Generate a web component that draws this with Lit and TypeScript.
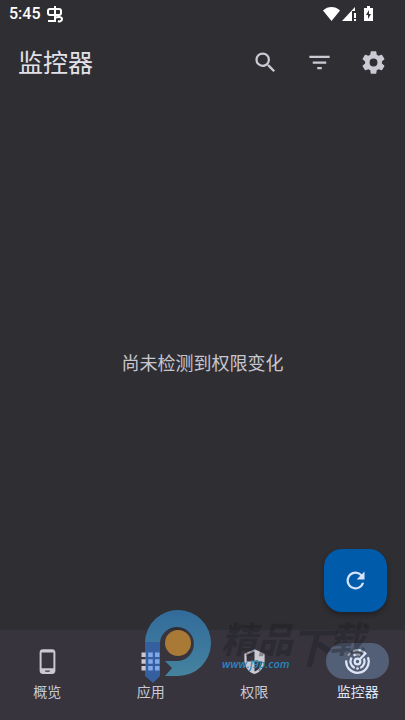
import { LitElement, html, css, svg } from "lit";
import { customElement, state } from "lit/decorators.js";
import { classMap } from "lit/directives/class-map.js";

const icons = {
  search: svg`<path d="M15.5 14h-.79l-.28-.27A6.47 6.47 0 0 0 16 9.5 6.5 6.5 0 1 0 9.5 16c1.61 0 3.09-.59 4.23-1.57l.27.28v.79l5 4.99L20.49 19l-4.99-5zm-6 0a4.5 4.5 0 1 1 0-9 4.5 4.5 0 0 1 0 9z"/>`,
  filter: svg`<path d="M10 18h4v-2h-4v2zM3 6v2h18V6H3zm3 7h12v-2H6v2z"/>`,
  settings: svg`<path d="M19.43 12.98c.04-.32.07-.64.07-.98s-.03-.66-.07-.98l2.11-1.65c.19-.15.24-.42.12-.64l-2-3.46c-.12-.22-.39-.3-.61-.22l-2.49 1c-.52-.4-1.08-.73-1.69-.98l-.38-2.65A.488.488 0 0 0 14 2h-4c-.25 0-.46.18-.49.42l-.38 2.65c-.61.25-1.17.59-1.69.98l-2.49-1c-.23-.09-.49 0-.61.22l-2 3.46c-.13.22-.07.49.12.64l2.11 1.65c-.04.32-.07.65-.07.98s.03.66.07.98l-2.11 1.65c-.19.15-.24.42-.12.64l2 3.46c.12.22.39.3.61.22l2.49-1c.52.4 1.08.73 1.69.98l.38 2.65c.03.24.24.42.49.42h4c.25 0 .46-.18.49-.42l.38-2.65c.61-.25 1.17-.59 1.69-.98l2.49 1c.23.09.49 0 .61-.22l2-3.46c.12-.22.07-.49-.12-.64l-2.11-1.65zM12 15.5a3.5 3.5 0 1 1 0-7 3.5 3.5 0 0 1 0 7z"/>`,
  refresh: svg`<path d="M17.65 6.35A7.96 7.96 0 0 0 12 4a8 8 0 1 0 7.73 10h-2.08A6 6 0 1 1 12 6c1.66 0 3.14.69 4.22 1.78L13 11h7V4l-2.35 2.35z"/>`,
  phone: svg`<path d="M16 1H8a3 3 0 0 0-3 3v16a3 3 0 0 0 3 3h8a3 3 0 0 0 3-3V4a3 3 0 0 0-3-3zm-2 20h-4v-1h4v1zm3.25-3H6.75V4h10.5v14z"/>`,
  apps: svg`<path d="M4 8h4V4H4v4zm6 12h4v-4h-4v4zm-6 0h4v-4H4v4zm0-6h4v-4H4v4zm6 0h4v-4h-4v4zm6-10v4h4V4h-4zm-6 4h4V4h-4v4zm6 6h4v-4h-4v4zm0 6h4v-4h-4v4z"/>`,
  shield: svg`<path d="M12 1 3 5v6c0 5.55 3.84 10.74 9 12 5.16-1.26 9-6.45 9-12V5l-9-4zm0 10.99h7c-.53 4.12-3.28 7.79-7 8.94V12H5V6.3l7-3.11v8.8z"/>`,
  radar: svg`<g fill="none" stroke="currentColor" stroke-width="2"><path d="M2 11A10 10 0 1 0 21.2 8.200M3.700 6.700 5.500 4.500M8 2.900A10 10 0 0 1 19 4.900L13.800 10.200M6.800 8.600A6.200 6.200 0 0 0 9.500 17.700M14.500 17.700A6.200 6.200 0 0 0 17.600 9.400M8.500 6.800A6.200 6.200 0 0 1 14.500 6.300"/><circle cx="12" cy="12" r="2.500"/></g><circle cx="12" cy="18.200" r="1.200"/>`,
};

type IconName = keyof typeof icons;

const icon = (name: IconName) =>
  html`<svg class="icon" viewBox="0 0 24 24" aria-hidden="true">${icons[name]}</svg>`;

const tabs: { label: string; icon: IconName }[] = [
  { label: "概览", icon: "phone" },
  { label: "应用", icon: "apps" },
  { label: "权限", icon: "shield" },
  { label: "监控器", icon: "radar" },
];

@customElement("app-root")
export class AppRoot extends LitElement {
  @state() private current = 3;

  static styles = css`
    :host {
      display: flex;
      flex-direction: column;
      position: relative;
      min-height: 100vh;
      background: #2f2e33;
      color: #e4e2e9;
      font-family: Roboto, "Noto Sans CJK SC", sans-serif;
      overflow: hidden;
    }
    * { box-sizing: border-box; }
    svg { display: block; }
    button {
      border: 0;
      padding: 0;
      margin: 0;
      background: none;
      color: inherit;
      font: inherit;
      cursor: pointer;
    }
    .icon { width: 27px; height: 27px; fill: currentColor; }
    .status {
      display: flex;
      align-items: center;
      height: 28px;
      padding: 0 30px 0 9px;
      color: #fff;
    }
    .time { font-size: 16px; line-height: 20px; font-weight: 500; }
    .note { width: 18px; height: 18px; margin-left: 6px; }
    .signals { width: 52px; height: 16px; margin-left: auto; }
    .bar {
      display: flex;
      align-items: center;
      height: 69px;
      padding: 0 5px 0 18px;
    }
    h1 {
      flex: 1;
      margin: 0;
      padding-top: 2px;
      font-size: 25px;
      line-height: 32px;
      font-weight: 400;
    }
    .action {
      display: grid;
      place-items: center;
      width: 54px;
      height: 54px;
      color: #cbcad3;
    }
    main {
      flex: 1;
      display: grid;
      place-items: center;
    }
    .empty {
      margin: 0;
      font-size: 18px;
      line-height: 28px;
      color: #c7c6ce;
    }
    .fab {
      position: absolute;
      right: 18px;
      bottom: 108px;
      display: grid;
      place-items: center;
      width: 63px;
      height: 63px;
      border-radius: 18px;
      background: #005cab;
      color: #d7e3fb;
      box-shadow: 0 3px 5px rgba(0, 0, 0, 0.3);
    }
    nav {
      display: flex;
      gap: 9px;
      height: 90px;
      background: #37343e;
    }
    .tab {
      flex: 1;
      display: flex;
      flex-direction: column;
      align-items: center;
      padding-top: 13px;
      gap: 3px;
      font-size: 14px;
      line-height: 20px;
      color: #cac9d2;
    }
    .pill {
      display: grid;
      place-items: center;
      width: 63px;
      height: 36px;
      border-radius: 18px;
    }
    .active { color: #dde4f5; }
    .active .pill { background: #535f76; }
    .mark {
      position: absolute;
      right: 32px;
      bottom: 30px;
      width: 230px;
      height: 80px;
      pointer-events: none;
    }
    .brand {
      font: italic 700 36px "Noto Sans CJK SC", sans-serif;
      fill: #1b1a1e;
      fill-opacity: 0.4;
    }
    .tall { font-size: 42px; }
    .site {
      font: italic 600 11px "Open Sans", sans-serif;
      fill: #2b86bb;
    }
  `;

  render() {
    return html`
      <div class="status">
        <span class="time">5:45</span>
        <svg class="note" viewBox="0 0 18 18" fill="none" stroke="currentColor" stroke-width="2" aria-hidden="true">
          <rect x="1" y="4" width="13" height="6" rx="2"/>
          <path d="M8 1v15H1M8 13c3-2 7-1 7 1s-2 3-4 2"/>
        </svg>
        <svg class="signals" viewBox="0 0 52 16" fill="currentColor" aria-hidden="true">
          <path d="M0 4.500C5-.1 12-.1 17 4.500L8.500 15z"/>
          <path d="M19 15 32 1v4h-3v10zM31 7h2v5h-2zM31 13h2v2h-2z"/>
          <path fill-rule="evenodd" d="M41 2h3V0h3v2h3v13h-9zM46 4l-3 5h2v4l3-5h-2z"/>
        </svg>
      </div>
      <header class="bar">
        <h1>监控器</h1>
        <button class="action" aria-label="搜索">${icon("search")}</button>
        <button class="action" aria-label="筛选">${icon("filter")}</button>
        <button class="action" aria-label="设置">${icon("settings")}</button>
      </header>
      <main><p class="empty">尚未检测到权限变化</p></main>
      <nav>
        ${tabs.map(
          (tab, i) => html`<button
            class=${classMap({ tab: true, active: i === this.current })}
            aria-current=${i === this.current ? "page" : "false"}
            @click=${() => (this.current = i)}
          >
            <span class="pill">${icon(tab.icon)}</span>
            <span>${tab.label}</span>
          </button>`
        )}
      </nav>
      <svg class="mark" viewBox="0 0 230 80" aria-hidden="true">
        <defs>
          <linearGradient id="ring" x1="0" y1="0" x2="0" y2="1">
            <stop offset="0" stop-color="#326b9b"/>
            <stop offset="1" stop-color="#45839f"/>
          </linearGradient>
        </defs>
        <path fill="url(#ring)" d="M2 32a33 33 0 1 1 33 34H22l7-8-7-7h13a17 17 0 1 0-18-19z"/>
        <path fill="#368aff" fill-opacity="0.5" d="M2 32h15v34l-7 7-8-7z"/>
        <circle cx="35" cy="33" r="13" fill="#a87a35"/>
        <text class="brand" y="43"><tspan x="78">精品</tspan><tspan class="tall" x="147" y="53">下</tspan><tspan x="186" y="43">载</tspan></text>
        <text class="site" x="79" y="58">www.j9p.com</text>
      </svg>
      <button class="fab" aria-label="刷新">${icon("refresh")}</button>
    `;
  }
}
